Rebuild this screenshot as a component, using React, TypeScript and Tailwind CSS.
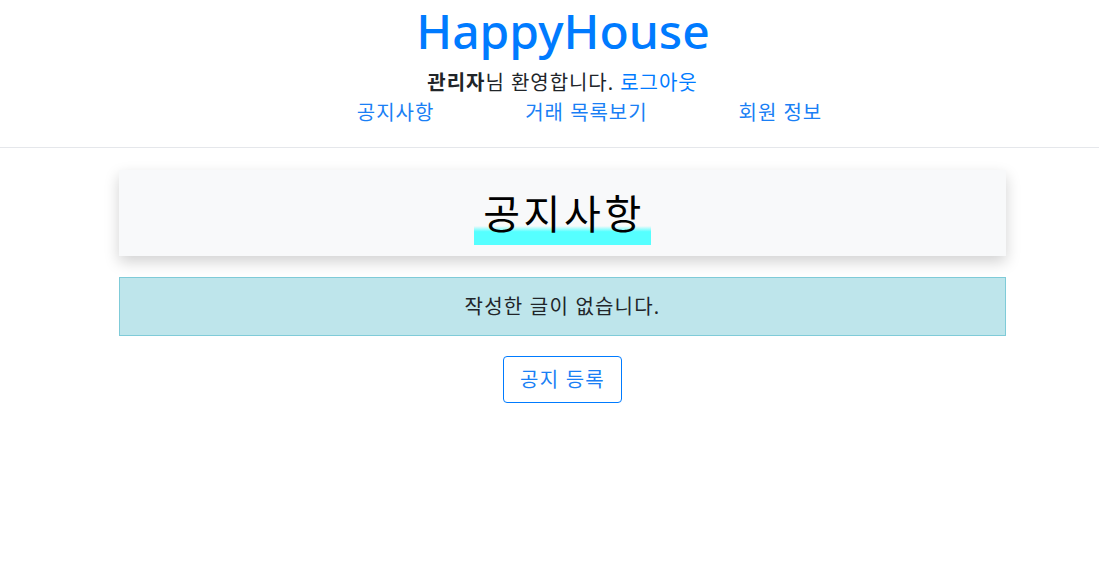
const ko = "font-['Noto_Sans','Noto_Sans_CJK_KR',sans-serif]";

const App = () => {
  return (
    <div className={`min-h-[570px] bg-white ${ko}`}>
      <header className="text-center">
        <h1 className="text-[48px] leading-[62px] font-medium text-[#007bff] pl-[27px]">
          HappyHouse
        </h1>
        <div className="w-[887px] ml-[119px] tracking-[0.06em]">
          <p className="text-[20px] leading-[30px] text-[#212529] mt-[6px]">
            <strong className="font-bold">관리자</strong>님 환영합니다.{" "}
            <a href="#" className="text-[#007bff]">
              로그아웃
            </a>
          </p>
          <nav className="flex justify-center gap-[91px] pl-[54px] text-[20px] leading-[30px] text-[#1a7ff5]">
            <a href="#">공지사항</a>
            <a href="#">거래 목록보기</a>
            <a href="#">회원 정보</a>
          </nav>
        </div>
        <div className="h-[19px]" />
        <hr className="border-t border-[#e5e7eb]" />
      </header>

      <main className="w-[887px] ml-[119px] pt-[22px]">
        <div className="h-[86px] bg-[#f8f9fa] shadow-[0_6px_14px_rgba(0,0,0,0.18)] flex items-center justify-center">
          <h2 className="relative text-[40px] leading-[48px] tracking-[0.09em] text-black pl-[9px] pr-[6px] mt-[2px]">
            <span className="relative z-10">공지사항</span>
            <span className="absolute left-0 right-0 top-[36px] h-[19px] bg-[linear-gradient(to_bottom,rgba(85,255,255,0)_0%,#55ffff_30%,#55ffff_100%)]" />
          </h2>
        </div>

        <div className="mt-[21px] h-[59px] bg-[#bee5eb] border border-[#7fcbd8] flex items-center justify-center text-[20px] tracking-[0.06em] text-[#212529]">
          작성한 글이 없습니다.
        </div>

        <div className="flex justify-center mt-[20px]">
          <button className="h-[47px] px-[16px] border border-[#007bff] rounded-[4px] text-[20px] tracking-[0.06em] text-[#1a7ff5] bg-white">
            공지 등록
          </button>
        </div>
      </main>
    </div>
  );
};

export default App;
